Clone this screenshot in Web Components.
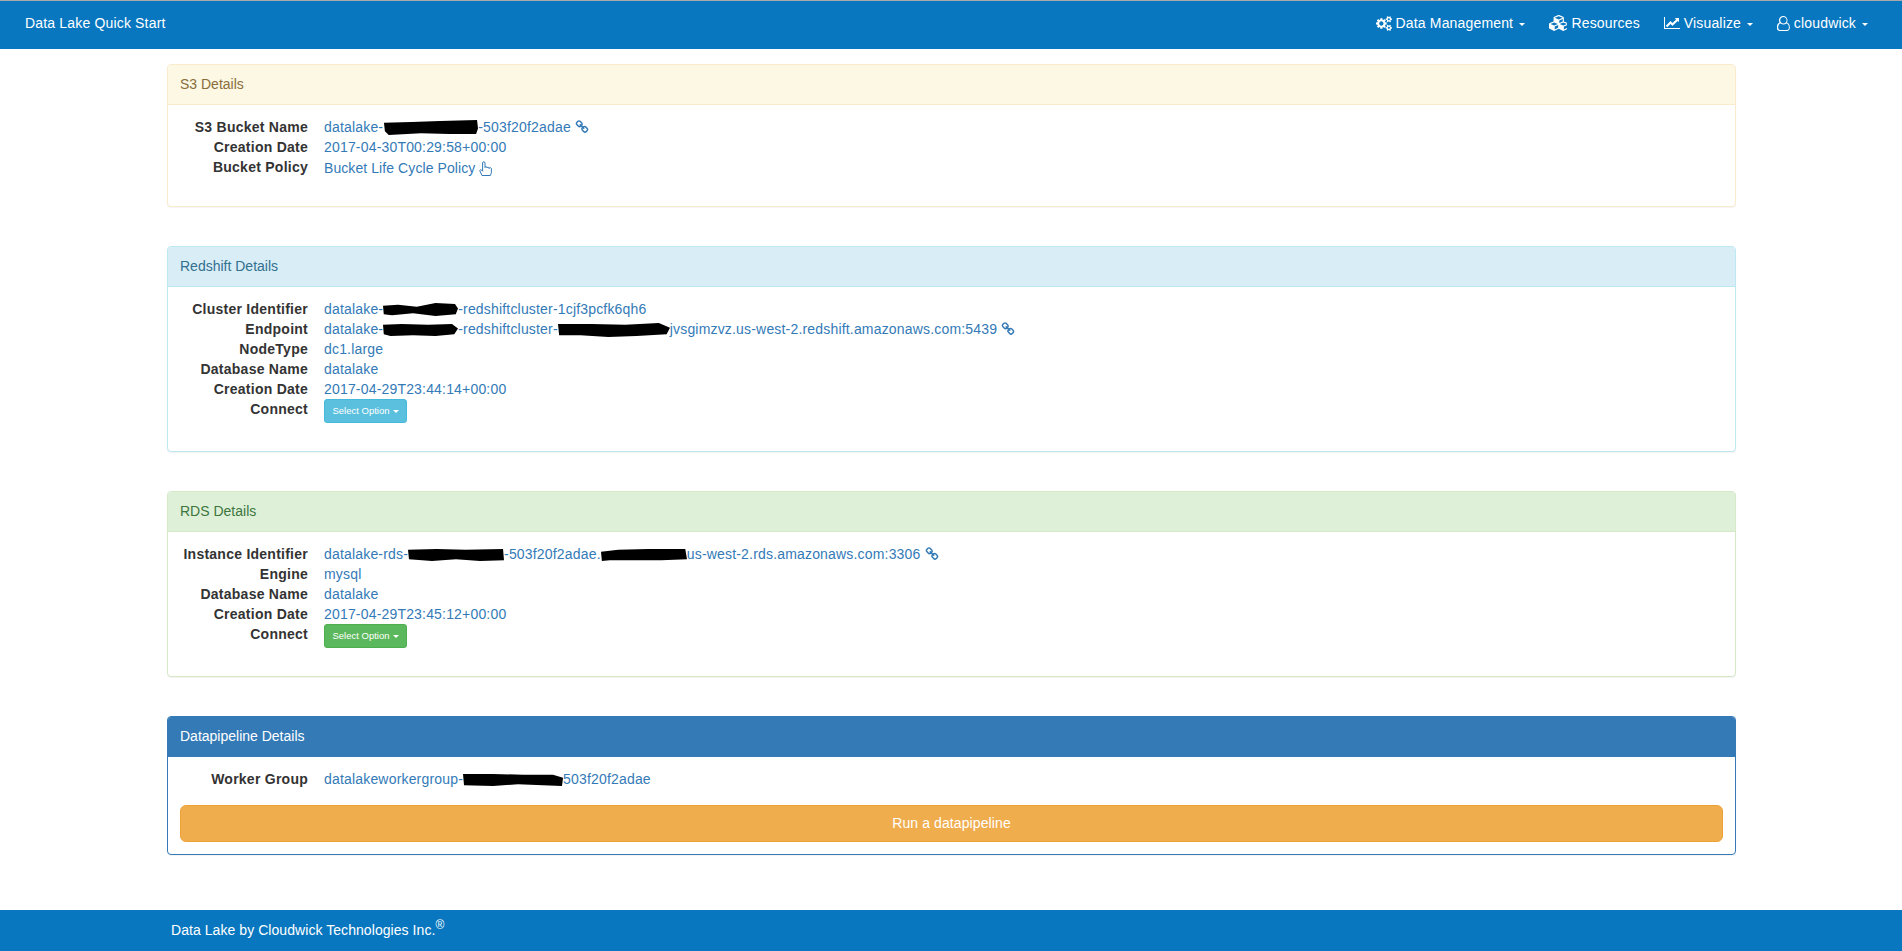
<!DOCTYPE html>
<html>
<head>
<meta charset="utf-8">
<title>Data Lake Quick Start</title>
<style>
html, body { margin: 0; padding: 0; background: #fff; }
body { font: 14px/20px "Liberation Sans", Arial, sans-serif; color: #333; }
</style>
</head>
<body>
<quick-start-page>
  <app-navbar slot="top" brand="Data Lake Quick Start">
    <nav-item icon="cogs" caret>Data Management</nav-item>
    <nav-item icon="cubes">Resources</nav-item>
    <nav-item icon="chart" caret>Visualize</nav-item>
    <nav-item icon="user" caret>cloudwick</nav-item>
  </app-navbar>

  <detail-panel kind="warning" heading="S3 Details" pad="28">
    <detail-row label="S3 Bucket Name">datalake-<redact-mark w="95" d="M1 3 L30 2 L60 1 L99 0 L100 9 L98 15 L70 15 L40 14 L6 16 L2 12 Z"></redact-mark>-503f20f2adae <fa-icon name="link"></fa-icon></detail-row>
    <detail-row label="Creation Date">2017-04-30T00:29:58+00:00</detail-row>
    <detail-row label="Bucket Policy"><span style="letter-spacing: .08px">Bucket Life Cycle Policy</span> <fa-icon name="hand"></fa-icon></detail-row>
  </detail-panel>

  <detail-panel kind="info" heading="Redshift Details" pad="28">
    <detail-row label="Cluster Identifier">datalake-<redact-mark w="75" d="M0 4 L20 3 L45 5 L70 1 L96 2 L100 7 L97 13 L70 15 L40 12 L12 14 L1 13 Z"></redact-mark>-redshiftcluster-1cjf3pcfk6qh6</detail-row>
    <detail-row label="Endpoint">datalake-<redact-mark w="75" d="M0 3 L25 2 L60 3 L92 2 L100 7 L95 13 L70 15 L40 14 L10 15 L1 13 Z"></redact-mark>-redshiftcluster-<redact-mark w="112" d="M0 2 L30 2 L60 3 L90 1 L100 6 L97 13 L70 15 L45 16 L20 14 L1 14 Z"></redact-mark>jvsgimzvz.us-west-2.redshift.amazonaws.com:5439 <fa-icon name="link"></fa-icon></detail-row>
    <detail-row label="NodeType">dc1.large</detail-row>
    <detail-row label="Database Name">datalake</detail-row>
    <detail-row label="Creation Date">2017-04-29T23:44:14+00:00</detail-row>
    <detail-row label="Connect"><drop-button kind="info">Select Option</drop-button></detail-row>
  </detail-panel>

  <detail-panel kind="success" heading="RDS Details" pad="28">
    <detail-row label="Instance Identifier">datalake-rds-<redact-mark w="96" d="M0 3 L30 2 L60 3 L99 2 L100 14 L75 15 L50 13 L25 15 L1 13 Z"></redact-mark>-503f20f2adae.<redact-mark w="86" d="M0 5 L20 3 L55 2 L98 2 L100 13 L70 14 L40 14 L10 14 L1 15 Z"></redact-mark>us-west-2.rds.amazonaws.com:3306 <fa-icon name="link"></fa-icon></detail-row>
    <detail-row label="Engine">mysql</detail-row>
    <detail-row label="Database Name">datalake</detail-row>
    <detail-row label="Creation Date">2017-04-29T23:45:12+00:00</detail-row>
    <detail-row label="Connect"><drop-button kind="success">Select Option</drop-button></detail-row>
  </detail-panel>

  <detail-panel kind="primary" heading="Datapipeline Details" pad="12">
    <detail-row label="Worker Group">datalakeworkergroup-<redact-mark w="100" d="M0 2 L30 2 L60 3 L90 3 L100 6 L99 15 L80 14 L55 13 L30 15 L1 14 Z"></redact-mark>503f20f2adae</detail-row>
    <run-button>Run a datapipeline</run-button>
  </detail-panel>

  <app-footer slot="bottom">Data Lake by Cloudwick Technologies Inc.</app-footer>
</quick-start-page>

<script>
// font awesome 4 glyphs, paths as they come from the svg set
const icons = {
  cogs: ["0 0 1920 1792", "M896 896q0-106-75-181t-181-75-181 75-75 181 75 181 181 75 181-75 75-181zm768 512q0-52-38-90t-90-38-90 38-38 90q0 53 37.5 90.5t90.5 37.5 90.5-37.5 37.5-90.5zm0-1024q0-52-38-90t-90-38-90 38-38 90q0 53 37.5 90.5t90.5 37.5 90.5-37.5 37.5-90.5zm-384 421v185q0 10-7 19.5t-16 10.5l-155 24q-11 35-32 76 34 48 90 115 7 11 7 20 0 12-7 19-23 30-82.5 89.5t-78.5 59.5q-11 0-21-7l-115-90q-37 19-77 31-11 108-23 155-7 24-30 24h-186q-11 0-20-7.5t-10-17.5l-23-153q-34-10-75-31l-118 89q-7 7-20 7-11 0-21-8-144-133-144-160 0-9 7-19 10-14 41-53t47-61q-23-44-35-82l-152-24q-10-1-17-9.5t-7-19.5v-185q0-10 7-19.5t16-10.5l155-24q11-35 32-76-34-48-90-115-7-11-7-20 0-12 7-20 22-30 82-89t79-59q11 0 21 7l115 90q34-18 77-32 11-108 23-154 7-24 30-24h186q11 0 20 7.5t10 17.5l23 153q34 10 75 31l118-89q8-7 20-7 11 0 21 8 144 133 144 160 0 8-7 19-12 16-42 54t-45 60q23 48 34 82l152 23q10 2 17 10.5t7 19.5zm640 533v140q0 16-149 31-12 27-30 52 51 113 51 138 0 4-4 7-122 71-124 71-8 0-46-47t-52-68q-20 2-30 2t-30-2q-14 21-52 68t-46 47q-2 0-124-71-4-3-4-7 0-25 51-138-18-25-30-52-149-15-149-31v-140q0-16 149-31 13-29 30-52-51-113-51-138 0-4 4-7 4-2 35-20t59-34 30-16q8 0 46 46.5t52 67.5q20-2 30-2t30 2q51-71 92-112l6-2q4 0 124 70 4 3 4 7 0 25-51 138 17 23 30 52 149 15 149 31zm0-1024v140q0 16-149 31-12 27-30 52 51 113 51 138 0 4-4 7-122 71-124 71-8 0-46-47t-52-68q-20 2-30 2t-30-2q-14 21-52 68t-46 47q-2 0-124-71-4-3-4-7 0-25 51-138-18-25-30-52-149-15-149-31v-140q0-16 149-31 13-29 30-52-51-113-51-138 0-4 4-7 4-2 35-20t59-34 30-16q8 0 46 46.5t52 67.5q20-2 30-2t30 2q51-71 92-112l6-2q4 0 124 70 4 3 4 7 0 25-51 138 17 23 30 52 149 15 149 31z", 15],
  cubes: ["0 0 2048 1792", "M640 1632l384-192v-314l-384 164v342zm-64-454l404-173-404-173-404 173zm1088 454l384-192v-314l-384 164v342zm-64-454l404-173-404-173-404 173zm-448-293l384-165v-266l-384 164v267zm-64-379l441-189-441-189-441 189zm1088 518v416q0 36-19 67t-52 47l-448 224q-25 14-57 14t-57-14l-448-224q-4-2-7-4-2 2-7 4l-448 224q-25 14-57 14t-57-14l-448-224q-33-16-52-47t-19-67v-416q0-38 21.5-70t56.5-48l434-186v-400q0-38 21.5-70t56.5-48l448-192q23-10 50-10t50 10l448 192q35 16 56.5 48t21.5 70v400l434 186q36 16 57 48t21 70z", 16],
  chart: ["0 0 2048 1792", "M2048 1536v128h-2048v-1536h128v1408h1920zm-128-1248v435q0 21-19.5 29.5t-35.5-7.5l-121-121-633 633q-10 10-23 10t-23-10l-233-233-416 416-192-192 585-585q10-10 23-10t23 10l233 233 464-464-121-121q-16-16-7.5-35.5t29.5-19.5h435q14 0 23 9t9 23z", 14],
  user: ["0 0 1536 1792", "M1201 784q47 14 89.5 38t89 73 79.5 115.5 55 172 22 236.5q0 154-100 263.5t-241 109.5h-880q-141 0-241-109.5t-100-263.5q0-132 22-236.5t55-172 79.5-115.5 89-73 89.5-38q-79-125-79-272 0-104 40.5-198.5t109.5-163.5 163.5-109.5 198.5-40.5 198.5 40.5 163.5 109.5 109.5 163.5 40.5 198.5q0 147-79 272zm-433-656q-159 0-271.5 112.5t-112.5 271.5 112.5 271.5 271.5 112.5 271.5-112.5 112.5-271.5-112.5-271.5-271.5-112.5zm441 1536q88 0 150.5-71.5t62.5-173.5q0-239-78.5-377t-225.5-145q-145 127-336 127t-336-127q-147 7-225.5 145t-78.5 377q0 102 62.5 173.5t150.5 71.5h880z", 15],
  link: ["0 0 1792 1792", "M1520 1216q0-40-28-68l-208-208q-28-28-68-28-42 0-72 32 3 3 19 18.5t21.5 21.5 15 19 13 25.5 3.5 27.5q0 40-28 68t-68 28q-15 0-27.5-3.5t-25.5-13-19-15-21.5-21.5-18.5-19q-33 31-33 73 0 40 28 68l206 207q27 27 68 27 40 0 68-26l147-146q28-28 28-67zm-703-705q0-40-28-68l-206-207q-28-28-68-28-39 0-68 27l-147 146q-28 28-28 67 0 40 28 68l208 208q27 27 68 27 42 0 72-31-3-3-19-18.5t-21.5-21.5-15-19-13-25.5-3.5-27.5q0-40 28-68t68-28q15 0 27.5 3.5t25.5 13 19 15 21.5 21.5 18.5 19q33-31 33-73zm895 705q0 120-85 203l-147 146q-83 83-203 83-121 0-204-85l-206-207q-83-83-83-203 0-123 88-209l-88-88q-86 88-208 88-120 0-204-84l-208-208q-84-84-84-204t85-203l147-146q83-83 203-83 121 0 204 85l206 207q83 83 83 203 0 123-88 209l88 88q86-88 208-88 120 0 204 84l208 208q84 84 84 204z", 14]
};

class faIcon extends HTMLElement {
    constructor () {
        super();
        this.attachShadow({mode: "open"});
    }

    connectedCallback () {
        const name = this.getAttribute("name");
        // the hand one is drawn by hand, it also makes its line 1px taller like the original
        let svg = `<svg width="13" height="15" viewBox="0 0 13 15" fill="none" stroke="currentColor" stroke-width="1"><path d="M3 14.5 L.9 10 c-.4-1 .9-1.8 1.6-1 L3.6 10.2 V2 c0-1.6 2.4-1.6 2.4 0 V6.5 c0-1.1 2-1.1 2 0 v.5 c0-1.1 2-1.1 2 0 v.5 c0-1.1 2.4-1 2.4 .1 V11 c0 1-.5 2.2-1 3.5 Z"/></svg>`;
        let extra = "margin-top: 4px; vertical-align: -3px;";
        if (name !== "hand") {
            const [box, d, size] = icons[name];
            const [, , w, h] = box.split(" ").map(Number);
            svg = `<svg width="${size * w / h}" height="${size}" viewBox="${box}" fill="currentColor"><path d="${d}"/></svg>`;
            extra = "vertical-align: -2px;";
        }
        this.shadowRoot.innerHTML = `<style>
:host { display: inline-block; line-height: 0; letter-spacing: 0; ${extra} }
svg { display: block; }
</style>${svg}`;
    }
}

class redactMark extends HTMLElement {
    constructor () {
        super();
        this.attachShadow({mode: "open"});
    }

    connectedCallback () {
        const w = this.getAttribute("w");
        this.shadowRoot.innerHTML = `<style>
:host { display: inline-block; line-height: 0; vertical-align: -3px; width: ${w}px; height: 15px; }
svg { display: block; width: 100%; height: 100%; }
</style><svg viewBox="0 0 100 16" preserveAspectRatio="none"><path fill="#000" d="${this.getAttribute("d")}"/></svg>`;
    }
}

class navItem extends HTMLElement {
    constructor () {
        super();
        this.attachShadow({mode: "open"});
    }

    connectedCallback () {
        const caret = this.hasAttribute("caret") ? `<i class="caret"></i>` : "";
        this.shadowRoot.innerHTML = `<style>
:host { display: flex; align-items: center; gap: 4px; padding: 0 12px; color: #fff; letter-spacing: .16px; }
.caret { width: 0; height: 0; margin-left: 2px; margin-top: 2px; border-top: 3px solid #fff; border-left: 3px solid transparent; border-right: 3px solid transparent; }
</style><fa-icon name="${this.getAttribute("icon")}"></fa-icon><slot></slot>${caret}`;
    }
}

class appNavbar extends HTMLElement {
    constructor () {
        super();
        this.attachShadow({mode: "open"});
    }

    connectedCallback () {
        this.shadowRoot.innerHTML = `<style>
:host { display: flex; align-items: center; justify-content: space-between; height: 44px; padding-bottom: 4px; background: #0877bf; border-top: 1px solid #a9a9a9; color: #fff; }
.brand { padding-left: 25px; letter-spacing: .17px; }
.items { display: flex; padding-right: 22px; }
</style><div class="brand">${this.getAttribute("brand")}</div><div class="items"><slot></slot></div>`;
    }
}

const panelKinds = {
    warning: ["#8a6d3b", "#fcf8e3", "#faebcc"],
    info: ["#31708f", "#d9edf7", "#bce8f1"],
    success: ["#3c763d", "#dff0d8", "#d6e9c6"],
    primary: ["#fff", "#337ab7", "#337ab7"]
};

class detailPanel extends HTMLElement {
    constructor () {
        super();
        this.attachShadow({mode: "open"});
    }

    connectedCallback () {
        const [color, bg, border] = panelKinds[this.getAttribute("kind")];
        this.shadowRoot.innerHTML = `<style>
:host { display: block; background: #fff; border: 1px solid ${border}; border-radius: 4px; box-shadow: 0 1px 1px rgba(0,0,0,.05); }
.heading { padding: 9px 12px 10px; color: ${color}; background: ${bg}; border-bottom: 1px solid ${border}; border-radius: 3px 3px 0 0; }
.body { padding: 12px 12px ${this.getAttribute("pad")}px; }
</style><div class="heading">${this.getAttribute("heading")}</div><div class="body"><slot></slot></div>`;
    }
}

class detailRow extends HTMLElement {
    constructor () {
        super();
        this.attachShadow({mode: "open"});
    }

    connectedCallback () {
        this.shadowRoot.innerHTML = `<style>
:host { display: grid; grid-template-columns: 128px 1fr; column-gap: 16px; line-height: 20px; }
.label { font-weight: bold; text-align: right; color: #333; letter-spacing: .25px; white-space: nowrap; }
.value { color: #337ab7; letter-spacing: .18px; white-space: nowrap; }
</style><div class="label">${this.getAttribute("label")}</div><div class="value"><slot></slot></div>`;
    }
}

class dropButton extends HTMLElement {
    constructor () {
        super();
        this.attachShadow({mode: "open"});
    }

    connectedCallback () {
        const colors = {info: ["#5bc0de", "#46b8da"], success: ["#5cb85c", "#4cae4c"]};
        const [bg, border] = colors[this.getAttribute("kind")];
        this.shadowRoot.innerHTML = `<style>
:host { display: inline-flex; align-items: center; justify-content: center; gap: 3px; box-sizing: border-box; width: 83px; height: 24px; background: ${bg}; border: 1px solid ${border}; border-radius: 3px; color: #fff; font-size: 9.5px; line-height: 1; letter-spacing: 0; }
.caret { width: 0; height: 0; border-top: 3px solid #fff; border-left: 3px solid transparent; border-right: 3px solid transparent; }
</style><slot></slot><i class="caret"></i>`;
    }
}

class runButton extends HTMLElement {
    constructor () {
        super();
        this.attachShadow({mode: "open"});
    }

    connectedCallback () {
        this.shadowRoot.innerHTML = `<style>
:host { display: block; box-sizing: border-box; margin-top: 16px; height: 37px; line-height: 35px; text-align: center; background: #f0ad4e; border: 1px solid #eea236; border-radius: 6px; color: #fff; letter-spacing: .1px; }
</style><slot></slot>`;
    }
}

class appFooter extends HTMLElement {
    constructor () {
        super();
        this.attachShadow({mode: "open"});
    }

    connectedCallback () {
        this.shadowRoot.innerHTML = `<style>
:host { display: flex; align-items: center; height: 39px; padding: 0 0 2px 171px; background: #0877bf; color: #fff; letter-spacing: .06px; }
sup { font-size: 12px; line-height: 0; vertical-align: super; }
</style><div><slot></slot><sup>&reg;</sup></div>`;
    }
}

class quickStartPage extends HTMLElement {
    constructor () {
        super();
        this.attachShadow({mode: "open"});
    }

    connectedCallback () {
        this.shadowRoot.innerHTML = `<style>
:host { display: flex; flex-direction: column; min-height: 100vh; }
main { flex: 1; display: flex; flex-direction: column; gap: 39px; padding: 15px 166px 0 167px; }
</style><slot name="top"></slot><main><slot></slot></main><slot name="bottom"></slot>`;
    }
}

customElements.define("fa-icon", faIcon);
customElements.define("redact-mark", redactMark);
customElements.define("nav-item", navItem);
customElements.define("app-navbar", appNavbar);
customElements.define("detail-panel", detailPanel);
customElements.define("detail-row", detailRow);
customElements.define("drop-button", dropButton);
customElements.define("run-button", runButton);
customElements.define("app-footer", appFooter);
customElements.define("quick-start-page", quickStartPage);
</script>
</body>
</html>
